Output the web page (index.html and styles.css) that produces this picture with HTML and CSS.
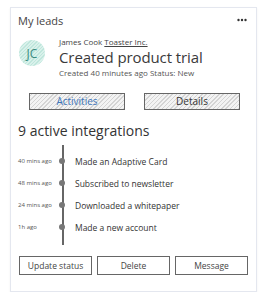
FILE: index.html
```html
<!DOCTYPE html>
<html>
<head>
<meta charset="utf-8">
<link rel="stylesheet" href="styles.css">
</head>
<body>
<div class="card">
  <div class="header">
    <span class="title">My leads</span>
    <svg class="more" width="10" height="4" viewBox="0 0 10 4"><circle cx="1.5" cy="2" r="1.2"/><circle cx="5" cy="2" r="1.2"/><circle cx="8.5" cy="2" r="1.2"/></svg>
  </div>
  <div class="lead">
    <div class="avatar">JC</div>
    <div class="lead-info">
      <div class="who">James Cook <u>Toaster Inc.</u></div>
      <div class="event">Created product trial</div>
      <div class="meta">Created 40 minutes ago Status: New</div>
    </div>
  </div>
  <div class="tabs">
    <div class="tab active">Activities</div>
    <div class="tab">Details</div>
  </div>
  <div class="count">9 active integrations</div>
  <div class="timeline">
    <div class="row"><span class="time">40 mins ago</span><span class="dot"></span><span class="text">Made an Adaptive Card</span></div>
    <div class="row"><span class="time">48 mins ago</span><span class="dot"></span><span class="text">Subscribed to newsletter</span></div>
    <div class="row"><span class="time">24 mins ago</span><span class="dot"></span><span class="text">Downloaded a whitepaper</span></div>
    <div class="row"><span class="time">1h ago</span><span class="dot"></span><span class="text">Made a new account</span></div>
  </div>
  <div class="actions">
    <div class="btn">Update status</div>
    <div class="btn">Delete</div>
    <div class="btn">Message</div>
  </div>
</div>
</body>
</html>
```
FILE: styles.css
```css
* { box-sizing: border-box; }
body {
  margin: 0;
  background: #fff;
  font-family: "Open Sans", sans-serif;
  color: #333;
}
.card {
  margin: 7px 0 0 10px;
  width: 247px;
  height: 285px;
  border: 1px solid #e4e7ef;
  box-shadow: 0 1px 2px rgba(0,0,0,0.06);
  padding: 5px 8px 0 7px;
}
.header {
  display: flex;
  justify-content: space-between;
  align-items: center;
  height: 14px;
}
.title { font-size: 11px; color: #444; }
.more { fill: #333; margin-right: 1px; }
.lead {
  display: flex;
  gap: 14px;
  margin-top: 9px;
}
.avatar {
  width: 26px;
  height: 26px;
  border-radius: 50%;
  margin-top: 4px;
  margin-left: 1px;
  background: repeating-linear-gradient(-45deg, #bfe6dc 0 1px, #d9f1eb 1px 2.5px);
  color: #3b8b80;
  font-size: 12px;
  display: flex;
  align-items: center;
  justify-content: center;
}
.lead-info { display: flex; flex-direction: column; }
.who { font-size: 8px; color: #444; line-height: 11px; }
.who u { text-decoration-thickness: 1px; }
.event { font-size: 15px; line-height: 20px; color: #3a3a3a; letter-spacing: -0.1px; }
.meta { font-size: 8px; color: #555; line-height: 12px; }
.tabs {
  display: flex;
  gap: 19px;
  margin-top: 14px;
  padding-left: 11px;
}
.tab {
  width: 96px;
  height: 17px;
  border: 1px solid #666;
  background: repeating-linear-gradient(-45deg, #d4d4d4 0 1px, #f3f3f3 1px 3px);
  font-size: 10px;
  text-align: center;
  line-height: 15px;
  color: #333;
}
.tab.active { color: #3d73b8; }
.count {
  font-size: 14px;
  margin-top: 11px;
  color: #333;
}
.timeline {
  position: relative;
  margin-top: 7px;
  padding-top: 3px;
  height: 98px;
}
.timeline::before {
  content: "";
  position: absolute;
  left: 44px;
  top: -2px;
  bottom: 0;
  width: 2px;
  background: #666;
}
.row {
  display: flex;
  align-items: center;
  height: 22px;
}
.time { width: 41px; font-size: 6px; color: #555; }
.dot {
  width: 6px;
  height: 6px;
  border-radius: 50%;
  background: #777;
  position: relative;
}
.text { margin-left: 10px; font-size: 8.5px; color: #333; }
.actions {
  display: flex;
  gap: 5px;
  margin-top: 11px;
  padding-left: 1px;
}
.btn {
  width: 73px;
  height: 19px;
  border: 1px solid #666;
  font-size: 8.5px;
  text-align: center;
  line-height: 17px;
  color: #444;
}
```
